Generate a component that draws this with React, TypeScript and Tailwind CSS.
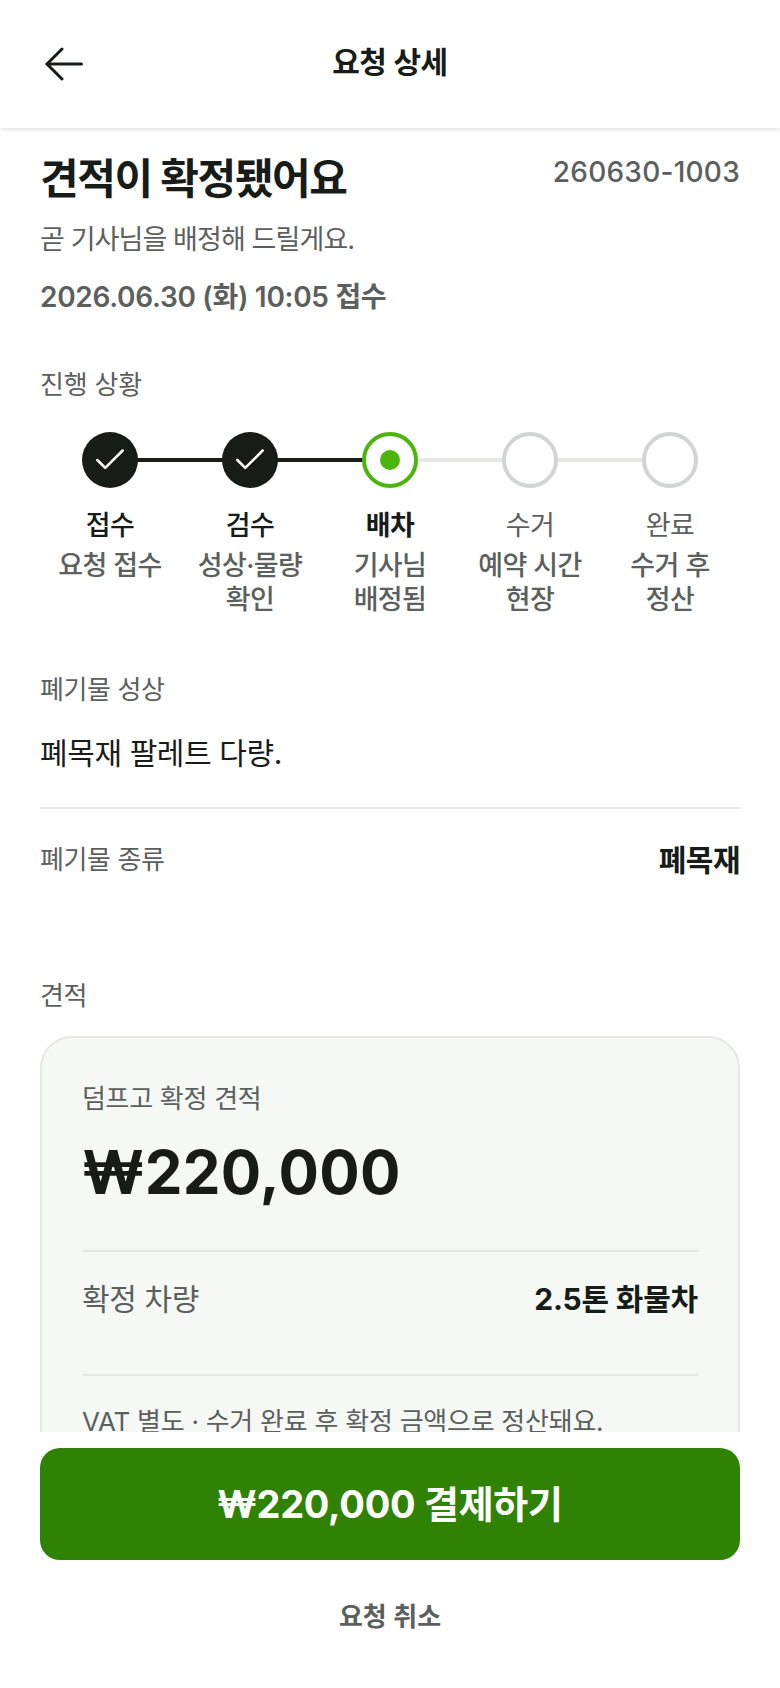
import { Check } from "lucide-react";

type Step = {
  title: string;
  desc: string[];
  state: "done" | "current" | "todo";
};

const steps: Step[] = [
  { title: "접수", desc: ["요청 접수"], state: "done" },
  { title: "검수", desc: ["성상·물량", "확인"], state: "done" },
  { title: "배차", desc: ["기사님", "배정됨"], state: "current" },
  { title: "수거", desc: ["예약 시간", "현장"], state: "todo" },
  { title: "완료", desc: ["수거 후", "정산"], state: "todo" },
];

const StepDot = ({ state }: { state: Step["state"] }) => {
  if (state === "done") {
    return (
      <div className="w-14 h-14 rounded-full bg-[#181c19] flex items-center justify-center text-white">
        <Check size={38} strokeWidth={1.6} />
      </div>
    );
  }
  if (state === "current") {
    return (
      <div className="w-14 h-14 rounded-full bg-white border-4 border-[#4cb50c] flex items-center justify-center">
        <div className="w-5 h-5 rounded-full bg-[#4cb50c]" />
      </div>
    );
  }
  return <div className="w-14 h-14 rounded-full bg-white border-4 border-[#d2d4d3]" />;
};

const Stepper = () => (
  <div className="flex mt-[29px]">
    {steps.map((step, i) => (
      <div key={step.title} className="relative w-[140px] flex flex-col items-center">
        {i < steps.length - 1 && (
          <div
            className={`absolute top-[26px] left-[70px] w-[140px] h-1 ${
              i < 2 ? "bg-[#181c19]" : "bg-[#e6e8e6]"
            }`}
          />
        )}
        <div className="relative">
          <StepDot state={step.state} />
        </div>
        <p
          className={`mt-[20px] text-[27px] leading-[36px] tracking-[-0.5px] ${
            step.state === "current"
              ? "font-bold text-[#181c19]"
              : step.state === "done"
                ? "font-medium text-[#181c19]"
                : "text-[#5b605d]"
          }`}
        >
          {step.title}
        </p>
        <div className="mt-[5px] text-[27px] leading-[34px] tracking-[-0.6px] font-medium text-[#5b605d] text-center whitespace-nowrap">
          {step.desc.map((line) => (
            <p key={line}>{line}</p>
          ))}
        </div>
      </div>
    ))}
  </div>
);

export default function App() {
  return (
    <div className="w-[780px] h-[1688px] overflow-hidden bg-white flex flex-col font-['Inter','Noto_Sans_CJK_KR',sans-serif] text-[#181c19]">
      <header className="relative z-10 h-[128px] shrink-0 bg-white shadow-[0_1px_5px_rgba(0,0,0,0.14)] flex items-center justify-center">
        <button className="absolute left-[45px] top-[47px] text-[#181c19]">
          <svg width="38" height="34" viewBox="0 0 38 34" fill="none" stroke="currentColor" strokeWidth="3" strokeLinecap="round" strokeLinejoin="round">
            <path d="M36.5 17H2" />
            <path d="M17 2 2 17l15 15" />
          </svg>
        </button>
        <h1 className="text-[30px] font-semibold tracking-[-0.5px] pb-1">요청 상세</h1>
      </header>

      <main className="flex-1 overflow-hidden px-10 pt-[23px]">
        <div className="flex justify-between">
          <h2 className="text-[42px] leading-[56px] font-bold tracking-[-1.4px]">견적이 확정됐어요</h2>
          <span className="text-[28px] leading-[36px] font-medium text-[#5b605d] mt-[3px] tracking-[0.25px]">260630-1003</span>
        </div>
        <p className="mt-[13px] text-[27px] leading-[40px] text-[#5b605d] tracking-[-0.9px]">곧 기사님을 배정해 드릴게요.</p>
        <p className="mt-[17px] text-[28px] leading-[40px] font-semibold text-[#5b605d] tracking-[-0.3px]">2026.06.30 (화) 10:05 접수</p>

        <p className="mt-[50px] text-[26px] leading-[36px] text-[#5b605d] tracking-[-0.2px]">진행 상황</p>
        <Stepper />

        <p className="mt-[55px] text-[26px] leading-[36px] text-[#5b605d] tracking-[-0.4px]">폐기물 성상</p>
        <p className="mt-[24px] text-[30px] leading-[42px] tracking-[-0.4px]">폐목재 팔레트 다량.</p>
        <div className="mt-[33px] h-[2px] bg-[#e6e8e6]" />
        <div className="mt-[33px] flex justify-between items-center">
          <span className="text-[26px] leading-[36px] text-[#5b605d] tracking-[-0.4px]">폐기물 종류</span>
          <span className="text-[30px] leading-[36px] font-bold tracking-[-0.5px]">폐목재</span>
        </div>

        <p className="mt-[100px] text-[26px] leading-[36px] text-[#5b605d] tracking-[-0.4px]">견적</p>
        <section className="mt-[22px] rounded-[32px] border-2 border-[#e6e8e6] bg-[#f6f8f6] px-10 pt-[43px] pb-10">
          <p className="text-[26px] leading-[36px] text-[#5b605d] tracking-[-0.3px]">덤프고 확정 견적</p>
          <p className="mt-[13px] text-[60px] leading-[84px] font-bold tracking-[0.3px]">₩220,000</p>
          <div className="mt-[36px] h-[2px] bg-[#e6e8e6]" />
          <div className="flex justify-between items-start h-[122px] pt-[26px]">
            <span className="text-[30px] leading-[42px] text-[#5b605d] tracking-[-0.4px]">확정 차량</span>
            <span className="text-[30px] leading-[42px] font-bold tracking-[-0.2px]">2.5톤 화물차</span>
          </div>
          <div className="h-[2px] bg-[#e6e8e6]" />
          <p className="mt-[26px] text-[26px] leading-[40px] text-[#5b605d] tracking-[-0.25px] whitespace-nowrap">VAT 별도 · 수거 완료 후 확정 금액으로 정산돼요.</p>
        </section>
      </main>

      <footer className="h-[256px] shrink-0 bg-white px-10 pt-[16px]">
        <button className="w-full h-[112px] rounded-[20px] bg-[#308204] text-white text-[38px] font-bold tracking-[-0.3px]">
          ₩220,000 결제하기
        </button>
        <button className="block mx-auto mt-[37px] text-[26px] leading-[40px] font-semibold text-[#5b605d]">요청 취소</button>
      </footer>
    </div>
  );
}
